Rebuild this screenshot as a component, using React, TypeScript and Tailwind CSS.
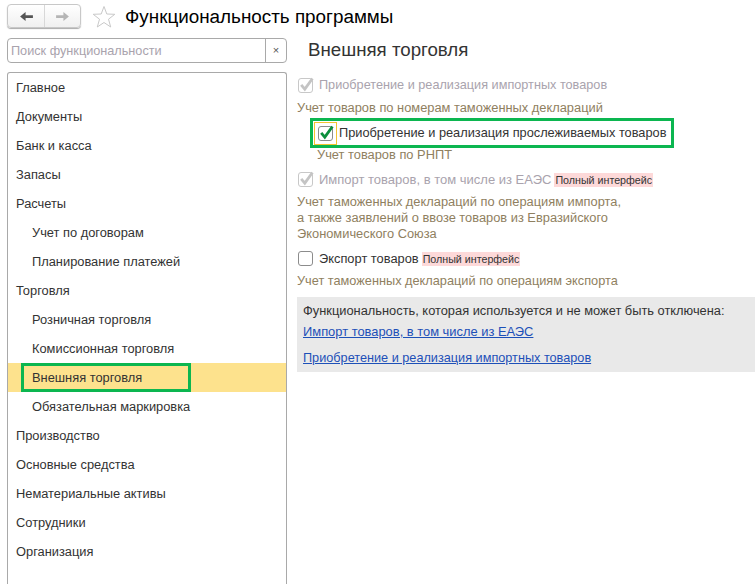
const menu: { label: string; sub?: boolean; active?: boolean }[] = [
  { label: "Главное" },
  { label: "Документы" },
  { label: "Банк и касса" },
  { label: "Запасы" },
  { label: "Расчеты" },
  { label: "Учет по договорам", sub: true },
  { label: "Планирование платежей", sub: true },
  { label: "Торговля" },
  { label: "Розничная торговля", sub: true },
  { label: "Комиссионная торговля", sub: true },
  { label: "Внешняя торговля", sub: true, active: true },
  { label: "Обязательная маркировка", sub: true },
  { label: "Производство" },
  { label: "Основные средства" },
  { label: "Нематериальные активы" },
  { label: "Сотрудники" },
  { label: "Организация" },
];

function Check({ checked, disabled, green }: { checked?: boolean; disabled?: boolean; green?: boolean }) {
  return (
    <span
      className={`relative block h-[15px] w-[15px] shrink-0 rounded-[3px] border bg-white ${
        disabled ? "border-[#c8c8c8]" : "border-[#8c8c8c]"
      }`}
    >
      {checked ? (
        <svg viewBox="0 0 16 16" className="absolute -top-[3px] -left-px h-[17px] w-[17px]">
          <path
            d="M3 8.4 L6.4 12.4 L13.6 2.4"
            fill="none"
            stroke={green ? "#0b8f3c" : "#c4c4c4"}
            strokeWidth="2.6"
          />
        </svg>
      ) : null}
    </span>
  );
}

function FullBadge() {
  return (
    <span className="ml-[3px] bg-[#fdd9d9] px-px text-[10.7px] leading-[14px] text-[#333]">
      Полный интерфейс
    </span>
  );
}

export default function App() {
  return (
    <div className="h-[584px] w-[755px] overflow-hidden bg-white font-['Liberation_Sans',Arial,sans-serif] text-[12.85px] text-[#333]">
      <div className="flex h-[33px] items-start pt-1 pl-[7px]">
        <div className="flex h-[24px] w-[74px] rounded-[4px] border border-[#c8c8c8] bg-gradient-to-b from-white to-[#f0f0f0] shadow-[0_1px_1px_#aaa]">
          <button className="flex h-full w-[37px] items-center justify-center border-r border-[#d8d8d8]">
            <svg viewBox="0 0 16 12" className="h-[11px] w-[15px]">
              <path d="M1 6 L7 1 V4.5 H15 V7.5 H7 V11 Z" fill="#555" />
            </svg>
          </button>
          <button className="flex h-full flex-1 items-center justify-center">
            <svg viewBox="0 0 16 12" className="h-[11px] w-[15px]">
              <path d="M15 6 L9 1 V4.5 H1 V7.5 H9 V11 Z" fill="#b5b5b5" />
            </svg>
          </button>
        </div>
        <svg viewBox="0 0 24 24" className="mt-px ml-[11px] h-[24px] w-[24px]">
          <path
            d="M12 1.5 L14.8 9 L22.8 9.3 L16.5 14.2 L18.7 22 L12 17.5 L5.3 22 L7.5 14.2 L1.2 9.3 L9.2 9 Z"
            fill="none"
            stroke="#c9c9c9"
            strokeWidth="1"
          />
        </svg>
        <h1 className="ml-[9px] text-[18.85px] leading-[26px] text-black">Функциональность программы</h1>
      </div>

      <div className="flex">
        <div className="ml-[7px] w-[280px] shrink-0">
          <div className="mt-[5px] flex h-[25px] rounded-[4px] border border-[#a9a9a9]">
            <span className="flex-1 pl-[3px] text-[12.7px] leading-[24px] text-[#a9a3ad]">Поиск функциональности</span>
            <span className="flex w-[21px] items-center justify-center border-l border-[#a9a9a9] text-[11px] text-[#555]">
              ×
            </span>
          </div>
          <div className="mt-[9px] h-[522px] rounded-t-[3px] border-x border-t border-[#a9a9a9]">
            {menu.map((item) => (
              <div
                key={item.label}
                className={`relative h-[29px] leading-[30px] ${item.sub ? "pl-[24px]" : "pl-[8px]"} ${
                  item.active ? "bg-[#fde28d]" : ""
                }`}
              >
                {item.label}
                {item.active ? (
                  <span className="absolute top-0 left-[13px] h-[29px] w-[170px] border-[3px] border-[#0cb650]" />
                ) : null}
              </div>
            ))}
          </div>
        </div>

        <div className="ml-[10px] min-w-0 flex-1">
          <h2 className="mt-[6px] pl-[11px] text-[18.7px] leading-[22px]">Внешняя торговля</h2>

          <div className="mt-[17px] flex h-[15px] items-center pl-px text-[12.7px] text-[#a9a3ad]">
            <Check checked disabled />
            <span className="ml-[6px]">Приобретение и реализация импортных товаров</span>
          </div>
          <p className="mt-[7px] leading-[15px] text-[#8f8060]">Учет товаров по номерам таможенных деклараций</p>

          <div className="mt-[3px] ml-[13px] flex h-[30px] w-[364px] items-center border-[3px] border-[#0cb650] pl-px">
            <span className="flex h-[23px] w-[23px] shrink-0 items-center justify-center border border-[#f4c430]">
              <Check checked green />
            </span>
            <span className="ml-[2px] whitespace-nowrap text-[12.78px]">
              Приобретение и реализация прослеживаемых товаров
            </span>
          </div>
          <p className="pl-[20px] leading-[13px] text-[#8f8060]">Учет товаров по РНПТ</p>

          <div className="mt-[11px] flex h-[15px] items-center pl-px text-[13px] text-[#a9a3ad]">
            <Check checked disabled />
            <span className="ml-[6px]">Импорт товаров, в том числе из ЕАЭС</span>
            <FullBadge />
          </div>
          <p className="mt-[7px] leading-[16px] text-[#8f8060]">
            Учет таможенных деклараций по операциям импорта,
            <br />а также заявлений о ввозе товаров из Евразийского
            <br />
            Экономического Союза
          </p>

          <div className="mt-[9px] flex h-[15px] items-center pl-px">
            <Check />
            <span className="ml-[6px]">Экспорт товаров</span>
            <FullBadge />
          </div>
          <p className="mt-[7px] text-[12.75px] leading-[15px] text-[#8f8060]">
            Учет таможенных деклараций по операциям экспорта
          </p>

          <div className="mt-[9px] h-[75px] bg-[#e9e9e9] pt-[6px] pl-[6px]">
            <p className="leading-[15px]">Функциональность, которая используется и не может быть отключена:</p>
            <a className="mt-[5px] block text-[12.9px] leading-[17px] text-[#1d50b8] underline">
              Импорт товаров, в том числе из ЕАЭС
            </a>
            <a className="mt-[10px] block text-[12.7px] leading-[17px] text-[#1d50b8] underline">
              Приобретение и реализация импортных товаров
            </a>
          </div>
        </div>
      </div>
    </div>
  );
}
